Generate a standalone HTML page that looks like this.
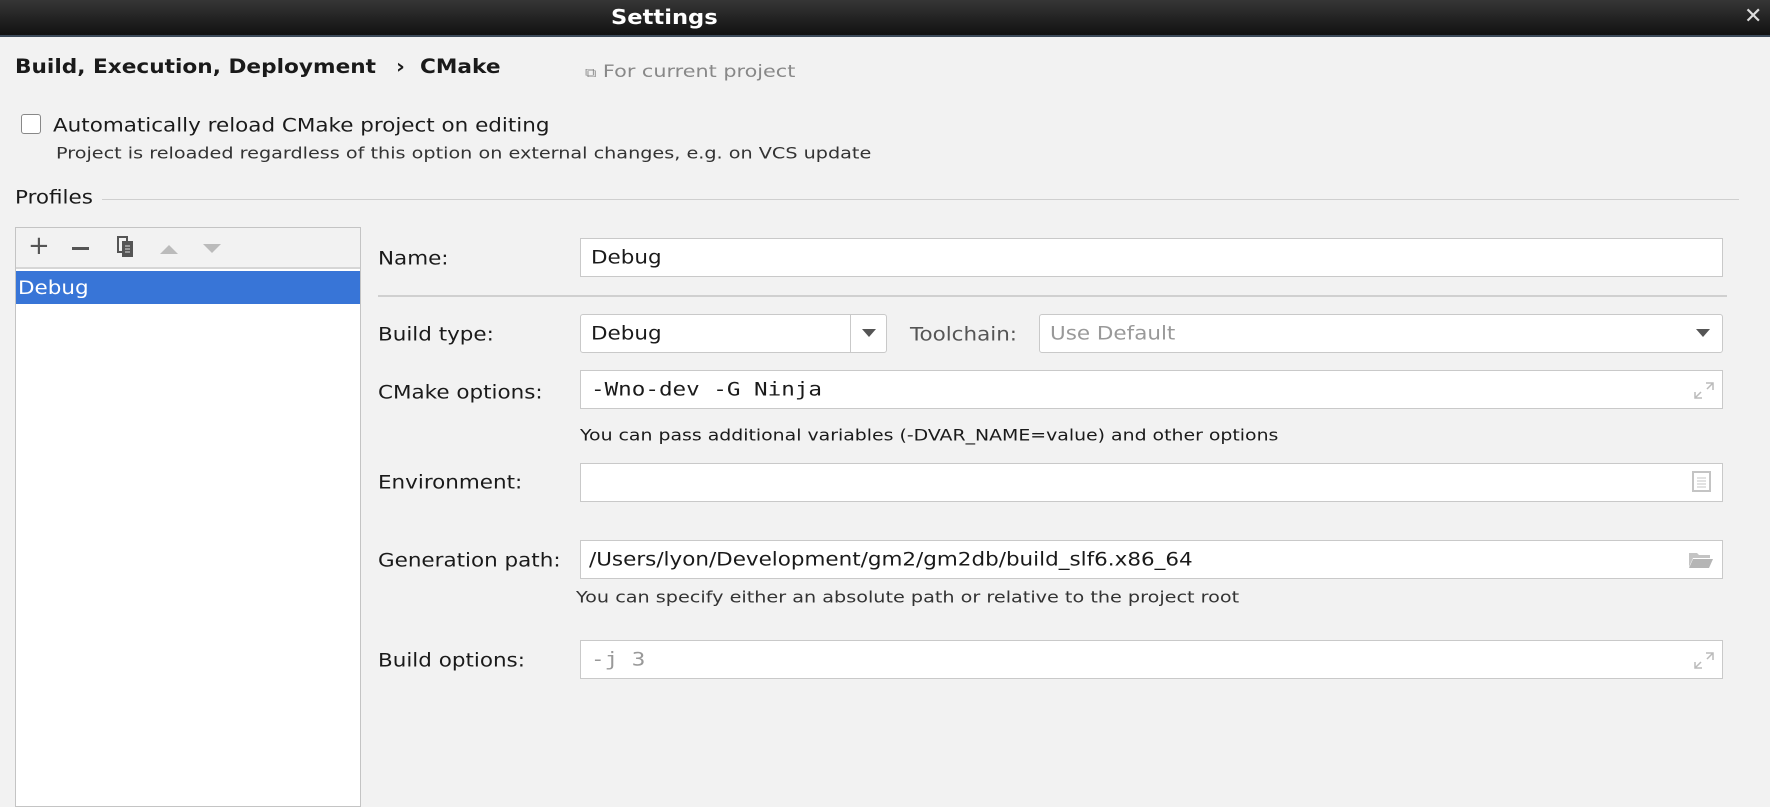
<!DOCTYPE html>
<html><head><meta charset="utf-8"><style>
*{box-sizing:border-box;margin:0;padding:0}
body{width:1770px;height:796px;overflow:hidden;background:#f2f2f2;font-family:"DejaVu Sans","Liberation Sans",sans-serif;color:#1a1a1a;position:relative}
.a{position:absolute;white-space:nowrap}
.s{transform-origin:left center;transform:scaleX(1.19)}
.title{left:0;top:0;width:1770px;height:37px;background:linear-gradient(#363636,#111);border-bottom:2px solid #3c4a5a}
.fld{position:absolute;background:#fff;border:1px solid #c9c9c9;height:39px}
.lbl{font-size:18.5px;transform-origin:left center;transform:translateY(-50%) scaleX(1.16)}
.hint{font-size:16px;transform-origin:left center;transform:translateY(-50%) scaleX(1.2)}
.mono{font-family:"DejaVu Sans Mono","Liberation Mono",monospace}
.ftxt{position:absolute;left:10px;top:52%;transform-origin:left center;transform:translateY(-50%) scaleX(1.16);font-size:18.5px;white-space:nowrap}
</style></head><body>
<div class="a title"></div>
<div class="a" style="left:611px;top:5px;color:#fff;font-weight:bold;font-size:20px;transform-origin:left;transform:scaleX(1.13)">Settings</div>
<div class="a" style="left:1744px;top:4px;color:#ddd;font-weight:bold;font-size:22px">✕</div>

<div class="a s" style="left:15px;top:55px;font-weight:bold;font-size:19.5px;transform:scaleX(1.11)">Build, Execution, Deployment</div>
<div class="a s" style="left:396px;top:55px;font-weight:bold;font-size:19.5px;transform:scaleX(1.11)">›&nbsp; CMake</div>
<div class="a s" style="left:585px;top:62px;color:#888;font-size:17px;transform:scaleX(1.22)"><span style="font-size:13px">⧉</span> For current project</div>

<div class="a" style="left:21px;top:114px;width:20px;height:20px;border:1px solid #888;border-radius:3px;background:#fff"></div>
<div class="a lbl" style="left:53px;top:126px">Automatically reload CMake project on editing</div>
<div class="a hint" style="left:56px;top:153px;color:#333">Project is reloaded regardless of this option on external changes, e.g. on VCS update</div>

<div class="a lbl" style="left:15px;top:198px">Profiles</div>
<div class="a" style="left:102px;top:199px;width:1637px;height:1px;background:#cfcfcf"></div>

<div class="a" style="left:15px;top:227px;width:346px;height:580px;border:1px solid #c4c4c4;background:#fff"></div>
<div class="a" style="left:16px;top:228px;width:344px;height:41px;background:#f2f2f2;border-bottom:2px solid #d6d6d6"></div>
<div class="a" style="left:28px;top:231px;font-size:26px;color:#555">+</div>
<div class="a" style="left:72px;top:247px;width:17px;height:3px;background:#555"></div>
<svg class="a" style="left:117px;top:236px" width="20" height="24"><rect x="1" y="1" width="9" height="15" fill="none" stroke="#555" stroke-width="2"/><rect x="5" y="5" width="11" height="16" fill="#555"/><path d="M8 10h5M8 13h5M8 16h5" stroke="#ddd"/></svg>
<svg class="a" style="left:159px;top:243px" width="20" height="12"><path d="M1 11L10 2L19 11Z" fill="#bbb"/></svg>
<svg class="a" style="left:202px;top:243px" width="20" height="12"><path d="M1 1L10 10L19 1Z" fill="#bbb"/></svg>
<div class="a" style="left:16px;top:271px;width:344px;height:33px;background:#3875d7"></div>
<div class="a s" style="left:18px;top:278px;font-size:18.5px;color:#fff;transform:scaleX(1.16)">Debug</div>

<div class="a lbl" style="left:378px;top:259px">Name:</div>
<div class="fld" style="left:580px;top:238px;width:1143px"><span class="ftxt">Debug</span></div>
<div class="a" style="left:378px;top:295px;width:1349px;height:2px;background:#d0d0d0"></div>

<div class="a lbl" style="left:378px;top:335px">Build type:</div>
<div class="fld" style="left:580px;top:314px;width:307px;border-radius:3px"><span class="ftxt">Debug</span>
<div class="a" style="left:269px;top:0;width:1px;height:37px;background:#c9c9c9"></div>
<svg class="a" style="left:281px;top:14px" width="14" height="9"><path d="M0 0h14L7 8Z" fill="#555"/></svg></div>
<div class="a lbl" style="left:910px;top:335px;color:#555">Toolchain:</div>
<div class="fld" style="left:1039px;top:314px;width:684px;border-radius:3px"><span class="ftxt" style="color:#999">Use Default</span>
<svg class="a" style="left:656px;top:14px" width="14" height="9"><path d="M0 0h14L7 8Z" fill="#555"/></svg></div>

<div class="a lbl" style="left:378px;top:393px">CMake options:</div>
<div class="fld" style="left:580px;top:370px;width:1143px"><span class="ftxt mono" style="transform:translateY(-50%) scaleX(1.22)">-Wno-dev -G Ninja</span>
<svg class="a" style="left:1112px;top:10px" width="22" height="18"><path d="M13 2h7v7M20 2l-6 6M2 11v6h7M2 17l6-6" stroke="#bbb" stroke-width="1.5" fill="none"/></svg></div>
<div class="a hint" style="left:580px;top:435px;transform:translateY(-50%) scaleX(1.18)">You can pass additional variables (-DVAR_NAME=value) and other options</div>

<div class="a lbl" style="left:378px;top:483px">Environment:</div>
<div class="fld" style="left:580px;top:463px;width:1143px">
<svg class="a" style="left:1111px;top:7px" width="20" height="22"><rect x="1" y="1" width="17" height="19" fill="#fff" stroke="#c4c4c4" stroke-width="2"/><path d="M5 7h9M5 10h9M5 13h9M5 16h9" stroke="#c4c4c4"/></svg></div>

<div class="a lbl" style="left:378px;top:561px">Generation path:</div>
<div class="fld" style="left:580px;top:540px;width:1143px"><span class="ftxt" style="left:8px">/Users/lyon/Development/gm2/gm2db/build_slf6.x86_64</span>
<svg class="a" style="left:1107px;top:10px" width="26" height="18"><path d="M1 2h8l2 2h11v3H5L1 16Z" fill="#c4c4c4"/><path d="M5 8h20l-4 9H1Z" fill="#b5b5b5"/></svg></div>
<div class="a hint" style="left:576px;top:597px;color:#333">You can specify either an absolute path or relative to the project root</div>

<div class="a lbl" style="left:378px;top:661px">Build options:</div>
<div class="fld" style="left:580px;top:640px;width:1143px"><span class="ftxt mono" style="color:#999;transform:translateY(-50%) scaleX(1.22)">-j 3</span>
<svg class="a" style="left:1112px;top:10px" width="22" height="18"><path d="M13 2h7v7M20 2l-6 6M2 11v6h7M2 17l6-6" stroke="#bbb" stroke-width="1.5" fill="none"/></svg></div>
</body></html>
